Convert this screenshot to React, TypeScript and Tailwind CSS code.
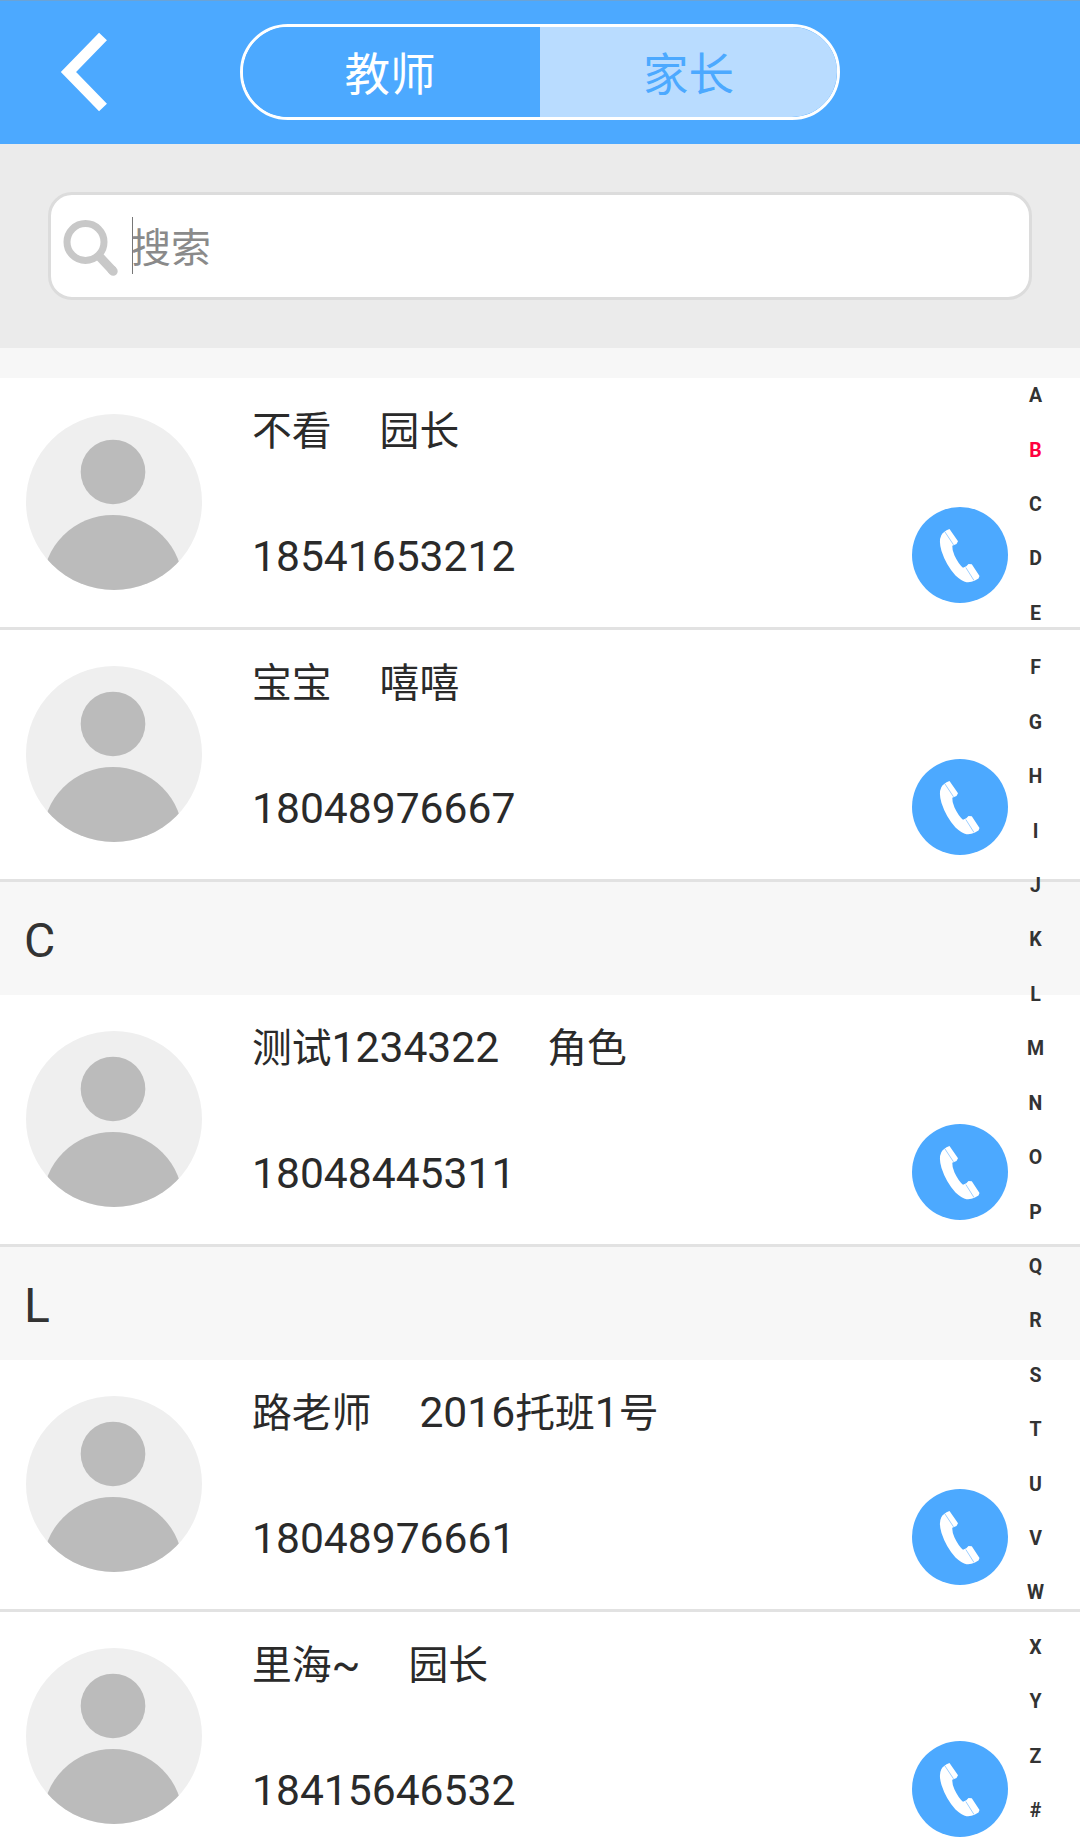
import { Fragment, useState } from 'react';

interface Contact {
  name: string;
  role: string;
  phone: string;
}

interface Section {
  letter: string;
  contacts: Contact[];
}

const sections: Section[] = [
  {
    letter: 'B',
    contacts: [
      { name: '不看', role: '园长', phone: '18541653212' },
      { name: '宝宝', role: '嘻嘻', phone: '18048976667' },
    ],
  },
  { letter: 'C', contacts: [{ name: '测试1234322', role: '角色', phone: '18048445311' }] },
  {
    letter: 'L',
    contacts: [
      { name: '路老师', role: '2016托班1号', phone: '18048976661' },
      { name: '里海~', role: '园长', phone: '18415646532' },
    ],
  },
];

const letters = 'ABCDEFGHIJKLMNOPQRSTUVWXYZ#'.split('');

// Chinese glyphs are set a little smaller than the latin digits beside them
function MixedText({ text }: { text: string }) {
  const runs = text.match(/[\u4e00-\u9fff]+|[^\u4e00-\u9fff]+/g) ?? [];
  return (
    <span className="whitespace-pre text-[42.6px]">
      {runs.map((run, i) => (
        <span key={i} className={/[\u4e00-\u9fff]/.test(run) ? 'text-[39.8px]' : ''}>
          {run}
        </span>
      ))}
    </span>
  );
}

function Avatar() {
  return (
    <svg className="w-[176px] h-[176px] shrink-0" viewBox="0 0 177 177">
      <defs>
        <clipPath id="avatar-clip">
          <circle cx="88.5" cy="88.5" r="88.5" />
        </clipPath>
      </defs>
      <g clipPath="url(#avatar-clip)">
        <rect width="177" height="177" fill="#efefef" />
        <circle cx="87.5" cy="58.3" r="32.5" fill="#bbbbbb" />
        <circle cx="87.3" cy="172" r="70.5" fill="#bbbbbb" />
      </g>
    </svg>
  );
}

function PhoneIcon() {
  return (
    <svg className="w-24 h-24" viewBox="0 0 96 96">
      <circle cx="48" cy="48" r="48" fill="#4ca9ff" />
      <path
        d="M37.5 22 L46 34.2 L44.5 37 L40.3 38.8 Q40 43 42.5 48.5 Q46.5 57 51 60.8 L54.3 59.3 L56.5 57 L59.8 57.2 L67.5 69 L66.5 71.5 L62.5 73.8 Q59 75.6 54.5 75.2 Q50 74.5 43.5 68.5 Q34 58 29.5 44 Q26.5 34 29.2 28.5 Q31 24.5 37.5 22 Z"
        fill="#fff"
      />
      <path d="M33 25 L41.5 37.8 M53.8 60.5 L62 73.5" stroke="#9dcfff" strokeWidth="1" />
    </svg>
  );
}

function ContactRow({ contact }: { contact: Contact }) {
  return (
    <li className="flex h-[252px] shrink-0 bg-white border-b-[3px] border-[#e2e2e2] pl-[26px] pr-[72px]">
      <div className="pt-[35.5px]">
        <Avatar />
      </div>
      <div className="flex flex-1 flex-col pl-[50px] pt-[22px] text-[#2a2a2a]">
        <div className="flex h-[60px] items-baseline gap-12 leading-[60px]">
          <MixedText text={contact.name} />
          <MixedText text={contact.role} />
        </div>
        <p className="mt-[66px] h-[60px] text-[42.6px] leading-[60px]">{contact.phone}</p>
      </div>
      <button className="mt-[129px] h-24 w-24 rounded-full">
        <PhoneIcon />
      </button>
    </li>
  );
}

export default function App() {
  const [activeLetter, setActiveLetter] = useState('B');

  return (
    <div className="relative flex h-[1845px] w-[1080px] flex-col overflow-hidden bg-[#f7f7f7] font-[Roboto,'Noto_Sans_CJK_SC',sans-serif]">
      {/* Header */}
      <header className="flex h-36 shrink-0 items-center border-t border-[#6ba3d6] bg-[#4ca9ff] pb-px">
        <button className="flex w-[240px] pl-[60px]">
          <svg className="h-20 w-12" viewBox="0 0 48 80" fill="none" stroke="#fff" strokeWidth="11">
            <path d="M43 4.5 L8.5 40 L43 75.5" />
          </svg>
        </button>
        <div className="flex h-24 w-[600px] overflow-hidden rounded-full border-[3px] border-white text-[45.5px]">
          <button className="w-1/2 bg-[#4ca9ff] pr-[3px] pt-[8px] text-white">教师</button>
          <button className="w-1/2 bg-[#b9dcff] pt-[8px] text-[#4ca9ff]">家长</button>
        </div>
      </header>

      {/* Search */}
      <div className="h-[204px] shrink-0 bg-[#ebebeb] px-12 pt-12">
        <div className="flex h-[108px] items-center rounded-3xl border-[3px] border-[#dcdcdc] bg-white pl-3">
          <svg className="h-[60px] w-[56px] shrink-0" viewBox="0 0 56 60" fill="none" stroke="#c8c8c8">
            <circle cx="22.5" cy="26" r="18.5" strokeWidth="7" />
            <path d="M35 39 L50 55" strokeWidth="9" />
            <path d="M49 54 L50.2 55.2" strokeWidth="9" strokeLinecap="round" />
          </svg>
          <span className="mb-px ml-[13px] h-[57px] w-px bg-[#777777]" />
          <span className="-ml-0.5 pt-[5px] text-[40px] text-[#8a8a8a]">搜索</span>
        </div>
      </div>

      {/* Contacts */}
      <div className="flex flex-1 flex-col overflow-hidden">
        {sections.map((section, i) => (
          <Fragment key={section.letter}>
            {i === 0 ? (
              <div className="h-[30px] shrink-0" />
            ) : (
              <h2 className="h-[113px] shrink-0 pl-6 text-[48px] leading-[117px] text-[#333333]">{section.letter}</h2>
            )}
            <ul className="flex shrink-0 flex-col">
              {section.contacts.map((contact) => (
                <ContactRow key={contact.phone} contact={contact} />
              ))}
            </ul>
          </Fragment>
        ))}
      </div>

      {/* Letter index */}
      <nav className="absolute right-0 top-[369px] flex w-[89px] flex-col">
        {letters.map((letter) => (
          <button
            key={letter}
            onClick={() => setActiveLetter(letter)}
            className={`h-[54.43px] text-[19.5px] font-bold leading-[54px] ${
              letter === activeLetter ? 'text-[#ff0040]' : 'text-[#333333]'
            }`}
          >
            {letter}
          </button>
        ))}
      </nav>
    </div>
  );
}
